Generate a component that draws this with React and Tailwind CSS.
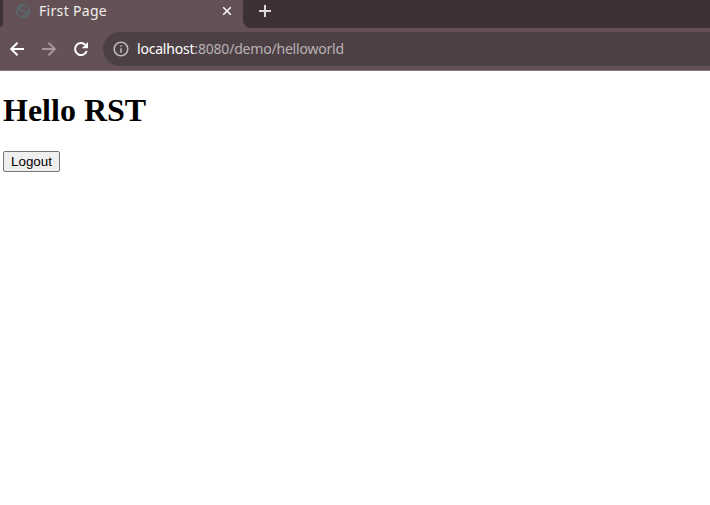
import { MdInfoOutline } from "react-icons/md";

function GlobeIcon() {
  return (
    <svg viewBox="0 0 16 16" className="size-4 shrink-0">
      <circle cx="8" cy="8" r="7.2" fill="#58666b" />
      <path
        d="M9.4 2.3 7.2 3.3v1.5H5.8v1.6l1.5 1h2.5v1h2.3l1.5-1.1c-.1-2.4-1.7-4.5-4.2-5.1ZM2.4 7.8c0 3 2.2 5.4 5.2 5.8v-1.4l1.5-.7.8-1.6-1.3-.7H6.7l-.9-1.4H2.4Z"
        fill="#645156"
      />
    </svg>
  );
}

function CloseIcon() {
  return (
    <svg viewBox="0 0 14 14" className="ml-auto mr-[9px] size-[14px] text-[#f5f3f3]">
      <path d="m3.2 3.2 7.6 7.6m0-7.6-7.6 7.6" stroke="currentColor" strokeWidth="1.6" />
    </svg>
  );
}

function PlusIcon() {
  return (
    <svg viewBox="0 0 20 20" className="mt-px size-5 text-[#dedada]">
      <path d="M10 4v12M4 10h12" stroke="currentColor" strokeWidth="2" />
    </svg>
  );
}

function BackIcon() {
  return (
    <svg viewBox="0 0 20 20" className="size-5 text-white">
      <path d="M17 10H4.5M10.5 3.7 4.2 10l6.3 6.3" fill="none" stroke="currentColor" strokeWidth="2" />
    </svg>
  );
}

function ForwardIcon() {
  return (
    <svg viewBox="0 0 20 20" className="ml-3 size-5 text-[#a3979a]">
      <path d="M3 10h12.5M9.5 3.7l6.3 6.3-6.3 6.3" fill="none" stroke="currentColor" strokeWidth="2" />
    </svg>
  );
}

function ReloadIcon() {
  return (
    <svg viewBox="0 0 20 20" className="ml-3 size-5 text-white">
      <path d="M15.7 12A6 6 0 1 1 14.4 5.9" fill="none" stroke="currentColor" strokeWidth="2" />
      <path d="M17 3v6.2h-6.2Z" fill="currentColor" />
    </svg>
  );
}

function TabStrip() {
  return (
    <div className="flex h-7 bg-[#645156]">
      <div className="h-[27px] w-[3px] rounded-br-[3px] bg-[#3e3135]" />
      <div className="flex h-[22px] w-60 items-center pl-3">
        <GlobeIcon />
        <span className="ml-2 whitespace-nowrap text-[14px] leading-5 tracking-[0.32px] text-[#f0eded]">First Page</span>
        <CloseIcon />
      </div>
      <div className="flex-1 rounded-bl-[8px] bg-[#3e3135] pl-3">
        <PlusIcon />
      </div>
    </div>
  );
}

function Toolbar() {
  return (
    <div className="flex h-[43px] items-center border-b border-[#8b777d] bg-[#645156] pl-[7px]">
      <BackIcon />
      <ForwardIcon />
      <ReloadIcon />
      <div className="ml-3 flex h-[34px] flex-1 items-center rounded-l-full bg-[#4d4045] pl-[9px]">
        <MdInfoOutline className="size-[18px] text-[#c0babc]" />
        <span className="ml-[7px] whitespace-nowrap text-[14px] leading-5 tracking-[-0.2px] text-[#b8b2b4]">
          <span className="text-white">localhost</span>:8080/demo/helloworld
        </span>
      </div>
    </div>
  );
}

export default function App() {
  return (
    <div className="h-[505px] w-[710px] overflow-hidden bg-white font-['Noto_Sans',sans-serif]">
      <TabStrip />
      <Toolbar />
      <main className="flex flex-col items-start pl-[3px] pt-[21px]">
        <h1 className="font-['Liberation_Serif',serif] text-[32px] font-bold leading-[37px] text-black">Hello RST</h1>
        <button className="mt-[22px] h-[21px] w-[57px] rounded-[2px] border border-[#767676] bg-[#efefef] text-center font-['Liberation_Sans',sans-serif] text-[13.333px] leading-[19px] text-black">
          Logout
        </button>
      </main>
    </div>
  );
}
